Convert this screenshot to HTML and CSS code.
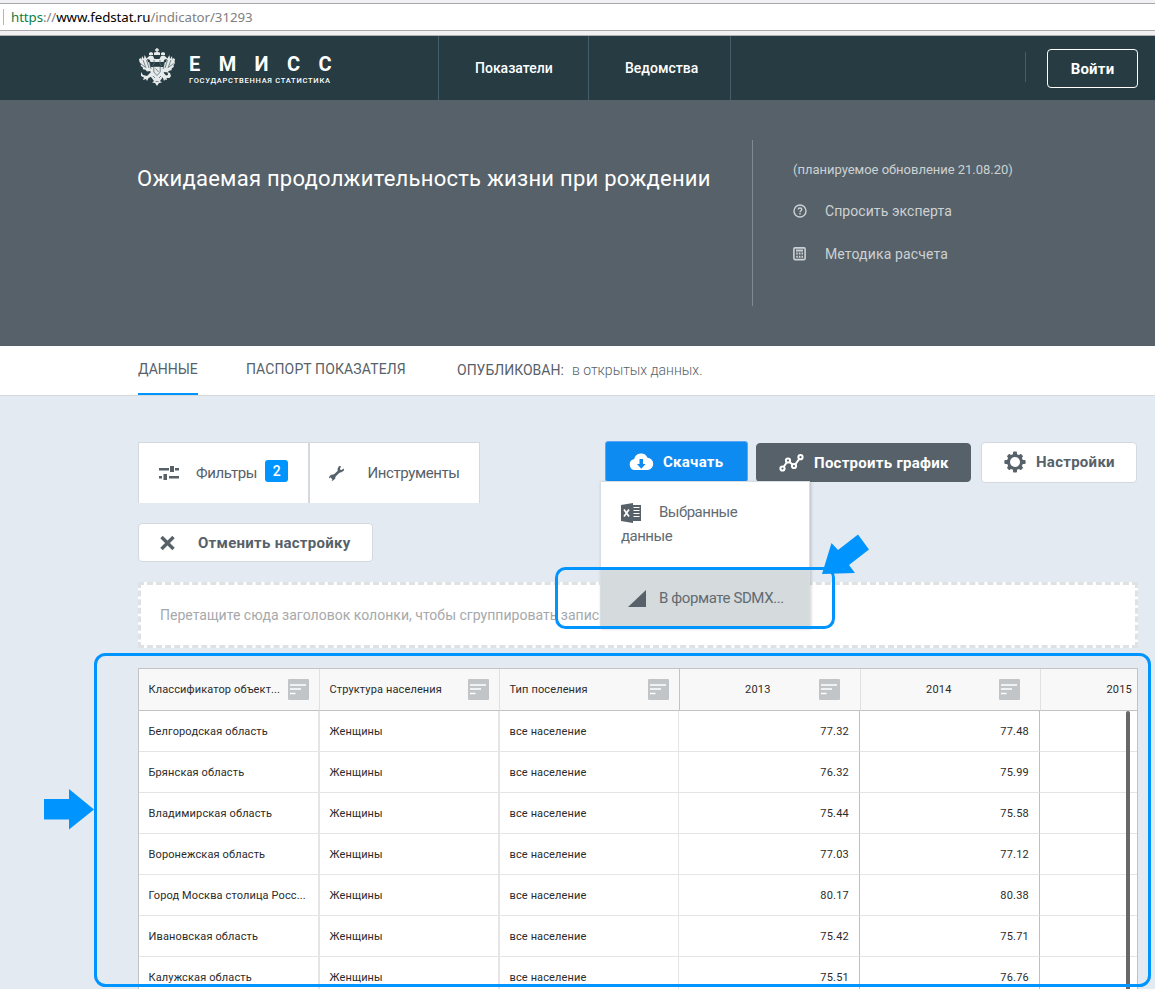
FILE: index.html
```html
<!DOCTYPE html>
<html lang="ru">
<head>
<meta charset="utf-8">
<title>ЕМИСС</title>
<link rel="stylesheet" href="styles.css">
</head>
<body>
<svg class="defs" width="0" height="0">
  <symbol id="sort" viewBox="0 0 21 21"><rect width="21" height="21" rx="1" fill="#c1c5c8"/><path d="M2 6h16M2 10h11M2 14.500h5.500" stroke="#fff" stroke-width="1.700"/></symbol>
</svg>
<div class="page">
  <div class="urlbar"><div class="url"><span class="proto">https</span>://<span class="host">www.fedstat.ru</span>/indicator/31293</div></div>

  <header class="top">
    <div class="logo">
      <svg class="eagle" width="36" height="38" viewBox="0 0 36 38" fill="#e6eaea">
        <path d="M17.300 0h1.400v1.300H20v1.400h-1.300V4l2.300.5V7h-6V4.500l2.300-.5V2.700H16V1.300h1.300z"/>
        <path d="M10 5l2-1 2 1v2h-4zM22 5l2-1 2 1v2h-4z"/>
        <path d="M9 9l2-1.500 3 .5 1.500 3h5L22 8l3-.5L27 9l1.500 2-3 .5-1 2.500h-13l-1-2.500-3-.5z"/>
        <path d="M0 11l2-1 .5 2L3 8l2 3 .5-4 2.500 4 1 3 2 1v4h14v-4l2-1 1-3 2.500-4 .5 4 2-3 .5 4 .5-2 2 1-.5 3 .5 1-1.500 2 .3 2-2 1.200-.3 2-2.500.6-1.500 1.700-3-.5L23 26H13l-2-3-3 .5L6.500 21.800 4 21.200l-.3-2-2-1.200.3-2L.5 14z"/>
        <path d="M12 22h12v7l-3 4 2 1.500-3 .5-2 3-2-3-3-.5 2-1.500-3-4z"/>
        <path d="M12 24l-4 4-4-1-2-3v4l3 1.500L4 32l3-1 1 2 1.500-3L14 28zM24 24l3 3.500 2-.5-.5-3 2.500 1 1 3-1.500 2-3 0 .5 2-2-.5-1 1.500L24 30z"/>
        <path d="M4 12l3 8M7.500 12l2.500 8M10.500 15l1.500 6M32 12l-3 8M28.500 12L26 20M25.500 15L24 21M15 12v4l-2 2M21 12v4l2 2M14.800 18.500h6.400v5.500L18 27.500 14.800 24zM16.500 20.500l3 3.500M14 28l2 2M22 28l-2 2M16.500 33.500h3M1.500 15.500L6 19M34.500 15.500L30 19" stroke="#5a6d73" stroke-width=".8" fill="none"/>
      </svg>
      <div class="brand"><b>ЕМИСС</b><span>ГОСУДАРСТВЕННАЯ СТАТИСТИКА</span></div>
    </div>
    <nav class="nav"><a class="n1"><span>Показатели</span></a><a class="n2"><span>Ведомства</span></a></nav>
    <div class="login"><i></i><button><span>Войти</span></button></div>
  </header>

  <section class="hero">
    <h1><span>Ожидаемая продолжительность жизни при рождении</span></h1>
    <div class="info">
      <p class="upd">(планируемое обновление 21.08.20)</p>
      <p class="ask"><svg width="14" height="14" viewBox="0 0 14 14" fill="none" stroke="#cdd1d3"><circle cx="7" cy="7" r="6" stroke-width="1.400"/><path d="M5.200 5.600c0-2.200 3.600-2.200 3.600 0C8.800 6.700 7 6.800 7 8.200M7 9v1.400" stroke-width="1.400"/></svg><span>Спросить эксперта</span></p>
      <p class="calc"><svg width="14" height="14" viewBox="0 0 14 14"><rect x=".9" y=".9" width="11.200" height="11.700" rx="1" fill="none" stroke="#cdd1d3" stroke-width="1.600"/><path d="M3 3.500h7M3.200 6.600h1.600M5.800 6.600h1.700M8.500 6.600h1.500M3.200 9.800h1.600M5.800 9.800h1.700M8.500 9.800h1.500" stroke="#cdd1d3" stroke-width="2"/></svg><span>Методика расчета</span></p>
    </div>
  </section>

  <div class="tabs">
    <a class="active">ДАННЫЕ</a><a class="pass">ПАСПОРТ ПОКАЗАТЕЛЯ</a>
    <div class="pub"><span class="lbl">ОПУБЛИКОВАН:</span><span class="val">в открытых данных.</span></div>
  </div>

  <main class="main">
    <div class="toolbar">
      <div class="panel">
        <div class="cell filt"><svg width="21" height="15" viewBox="0 0 21 15" fill="#566169"><path d="M0 2h10v2.500H0zM11 0h4v6h-4zM16 2h4v2.500h-4zM0 10h3v2.500H0zM4.500 8h3.500v6H4.500zM10 10h10v2.500H10z"/></svg><span class="t">Фильтры</span><span class="badge">2</span></div>
        <div class="cell tools"><svg width="15" height="15" viewBox="0 0 15 15"><path d="M2.500 12.500 11.500 4" stroke="#566169" stroke-width="2.600"/><path d="M10 0 8.500 3l.5 3 3 .5 3-2-.3-2L12 4.200l-1.200-1L12 .3zM5 8.500 2 8.700 0 11l.3 1.300 2-1.200L4 12.500l-1.500 2 1.200.3 2.500-2 .3-3z" fill="#566169"/></svg><span class="t">Инструменты</span></div>
      </div>
      <div class="buttons">
        <button class="btn dl"><svg width="25" height="18" viewBox="0 0 25 18"><path d="M6 17a5.500 5.500 0 0 1-.8-10.900A7 7 0 0 1 18.500 4.700 6.200 6.200 0 0 1 19 17z" fill="#fff"/><path d="M10.500 6h3.500v5h2.600l-4.300 4.700L8 11h2.500z" fill="#0e8bf1"/></svg><span>Скачать</span></button>
        <button class="btn chart"><svg width="25" height="18" viewBox="0 0 25 18" fill="none" stroke="#fff" stroke-width="2"><circle cx="3.500" cy="14.500" r="2.100"/><circle cx="9" cy="6.500" r="2.100"/><circle cx="15" cy="12" r="2.100"/><circle cx="21.500" cy="3.200" r="2.100"/><path d="M4.800 12.700 7.800 8.300M10.600 8l2.800 2.500M16.300 10.300 20.200 5"/></svg><span>Построить график</span></button>
        <button class="btn set"><svg width="22" height="22" viewBox="-11 -11 22 22"><g fill="#566169"><g id="teeth"><rect x="-2" y="-10.600" width="4" height="21.200" rx="1"/><rect x="-10.600" y="-2" width="21.200" height="4" rx="1"/></g><use href="#teeth" transform="rotate(45) scale(.93)"/><circle r="8"/></g><circle r="5" fill="#fff"/></svg><span>Настройки</span></button>
        <div class="menu">
          <div class="item sel"><svg width="21" height="21" viewBox="0 0 21 21"><path d="M0 2 12 0v20L0 18z" fill="#566169"/><path d="M12 2h8v16h-8z" fill="#566169"/><path d="M12.500 4.500h6M12.500 7.500h6M12.500 10.500h6M12.500 13.500h6" stroke="#fff" stroke-width="1.100"/><path d="M3 6.500 8 13.500M8 6.500 3 13.500" stroke="#fff" stroke-width="1.700"/></svg><span>Выбранные данные</span></div>
          <div class="item sdmx"><svg width="18" height="18" viewBox="0 0 18 18"><path d="M18 0v17H0z" fill="#566169"/></svg><span>В формате SDMX...</span></div>
        </div>
      </div>
    </div>
    <button class="btn cancel"><svg width="15" height="14" viewBox="0 0 15 14"><path d="M1.500 1 13.500 13M13.500 1 1.500 13" stroke="#566169" stroke-width="3.400"/></svg><span>Отменить настройку</span></button>
    <div class="drop"><span>Перетащите сюда заголовок колонки, чтобы сгруппировать записи</span></div>

    <div class="grid">
      <div class="row head"><div class="w1"><span>Классификатор объект...</span><svg><use href="#sort"/></svg></div><div><span>Структура населения</span><svg><use href="#sort"/></svg></div><div><span>Тип поселения</span><svg><use href="#sort"/></svg></div><div class="yr"><span>2013</span><svg><use href="#sort"/></svg></div><div class="yr"><span>2014</span><svg><use href="#sort"/></svg></div><div class="last"><span>2015</span></div></div>
      <div class="row"><div>Белгородская область</div><div>Женщины</div><div>все население</div><div>77.32</div><div>77.48</div><div></div></div>
      <div class="row"><div>Брянская область</div><div>Женщины</div><div>все население</div><div>76.32</div><div>75.99</div><div></div></div>
      <div class="row"><div>Владимирская область</div><div>Женщины</div><div>все население</div><div>75.44</div><div>75.58</div><div></div></div>
      <div class="row"><div>Воронежская область</div><div>Женщины</div><div>все население</div><div>77.03</div><div>77.12</div><div></div></div>
      <div class="row"><div>Город Москва столица Росс...</div><div>Женщины</div><div>все население</div><div>80.17</div><div>80.38</div><div></div></div>
      <div class="row"><div>Ивановская область</div><div>Женщины</div><div>все население</div><div>75.42</div><div>75.71</div><div></div></div>
      <div class="row"><div>Калужская область</div><div>Женщины</div><div>все население</div><div>75.51</div><div>76.76</div><div></div></div>
      <div class="scroll"></div>
    </div>
  </main>

  <svg class="notes" width="1155" height="989" viewBox="0 0 1155 989">
    <g fill="none" stroke="#0094ff" stroke-width="3"><rect x="95.500" y="654.500" width="1054" height="331" rx="10"/><rect x="556.500" y="568.500" width="277" height="59" rx="9"/></g>
    <path d="M44 799h25v-10l25 20.500-25 20v-10H44zM822 574l9.500-31 6.500 7 20-15.500 11 15-20 15.500 6 8z" fill="#0094ff"/>
  </svg>
</div>
</body>
</html>
```
FILE: styles.css
```css
* { box-sizing: border-box; }
body { margin: 0; background: #e4eaf2; font-family: Roboto, "Liberation Sans", sans-serif; color: #566169; }
p, h1 { margin: 0; }
svg { display: block; flex: none; }
.defs { position: absolute; }
.page { position: relative; width: 1155px; height: 989px; overflow: hidden; }
button { font: inherit; cursor: pointer; padding: 0; white-space: nowrap; }

.urlbar { height: 36px; background: #f1f0f2; border-bottom: 1px solid #b0b0b0; padding-top: 3px; }
.url { height: 28px; background: #fff; border: solid #a9a9a9; border-width: 1px 0; font: 13.300px/26px "Noto Sans", "Open Sans", sans-serif; color: #808080; padding-left: 7px; display: flex; position: relative; letter-spacing: -.08px; }
.url::before { content: ""; width: 1px; height: 16px; background: #b5b5b5; margin: 5px 7px 0 -4px; }
.proto { color: #0b8043; }
.host { color: #000; }

.top { height: 64px; background: #263b42; display: flex; }
.logo { width: 438px; padding-left: 139px; display: flex; }
.eagle { margin-top: 12px; }
.brand { margin-left: 14px; color: #fff; padding-top: 17px; white-space: nowrap; }
.brand b { display: block; font-weight: 700; font-size: 20px; line-height: 22px; letter-spacing: 18.400px; }
.brand span { display: block; font-weight: 500; font-size: 7.500px; line-height: 12px; letter-spacing: .75px; }
.nav { display: flex; color: #fff; font-weight: 500; font-size: 14px; line-height: 65px; }
.nav a { border-left: 1px solid #445e6a; padding-left: 36px; }
.n1 { width: 150px; }
.nav .n2 { width: 143px; border-right: 1px solid #445e6a; }
.login { margin-left: auto; margin-right: 17px; display: flex; }
.login i { width: 1px; height: 30px; background: #445e6a; margin: 16px 21px 0 0; }
.login button { width: 91px; height: 39px; margin-top: 13px; border: 1px solid #fff; border-radius: 4px; background: none; color: #fff; font-size: 15px; font-weight: 700; letter-spacing: .2px; }

.hero { height: 246px; background: #566169; display: flex; padding-left: 137px; }
.hero h1 { width: 615px; padding-top: 64px; font-size: 22px; line-height: 30px; font-weight: 400; color: #fff; letter-spacing: .25px; white-space: nowrap; }
.info { margin-top: 40px; height: 166px; border-left: 1px solid #818a91; padding: 19px 0 0 40px; color: #cdd1d3; font-size: 14px; white-space: nowrap; }
.info p { display: flex; align-items: center; }
.info svg { margin-right: 18px; }
.upd { height: 20px; font-size: 13px; letter-spacing: -.02px; }
.ask { margin-top: 21px; height: 22px; letter-spacing: .07px; }
.calc { margin-top: 21px; height: 22px; letter-spacing: .15px; }

.tabs { height: 50px; background: #fff; border-bottom: 1px solid #d3d9dd; padding-left: 138px; display: flex; font-size: 14px; line-height: 46px; white-space: nowrap; }
.tabs a { height: 49px; }
.active { border-bottom: 2px solid #0094ff; width: 60px; }
.pass { margin-left: 48px; width: 160px; letter-spacing: .12px; }
.pub { margin-left: 51px; padding-top: 1px; display: flex; }
.lbl { width: 115px; }
.val { font-weight: 300; }

.main { padding: 46px 0 0 138px; width: 1138px; }
.toolbar { display: flex; justify-content: space-between; height: 61px; }
.panel { display: flex; width: 342px; border: 1px solid #d3d9dd; border-bottom: 0; background: #fff; font-size: 15px; letter-spacing: -.4px; }
.cell { display: flex; align-items: center; width: 170px; padding-left: 20px; }
.filt { border-right: 2px solid #d3d9dd; width: 171px; }
.cell.tools { padding-left: 19px; }
.filt .t { margin-left: 16px; width: 69px; }
.badge { width: 23px; height: 22px; border-radius: 3px; background: #0094ff; color: #fff; font-size: 14px; font-weight: 500; line-height: 23px; text-align: center; margin-top: -5px; }
.tools .t { margin-left: 24px; }
.buttons { position: relative; display: flex; width: 533px; }
.btn { display: flex; align-items: center; border-radius: 4px; border: 1px solid #d3d9dd; background: #fff; color: #566169; font-size: 15px; font-weight: 700; letter-spacing: .27px; }
.dl { width: 143px; height: 41px; margin-top: -1px; background: #0e8bf1; border-color: #5aa4f5; color: #fff; padding-left: 23px; border-radius: 3px; }
.dl span { margin-left: 9px; }
.chart { width: 215px; height: 39px; margin: 1px 0 0 8px; background: #566169; border-color: #566169; color: #fff; padding-left: 22px; }
.chart span { margin-left: 10px; }
.set { width: 156px; height: 41px; margin-left: 10px; padding: 0 0 2px 22px; }
.set span { margin-left: 10px; }
.menu { position: absolute; left: -5px; top: 39px; width: 210px; height: 147px; background: #fff; border: 1px solid #d9dee2; box-shadow: 1px 1px 3px rgba(0,0,0,.2); font-size: 15px; line-height: 24px; z-index: 2; letter-spacing: -.4px; }
.item { color: #626b72; }
.item svg { display: inline-block; vertical-align: middle; margin-right: 17px; }
.sel { height: 86px; padding: 18px 60px 0 20px; }
.sel span { letter-spacing: -.5px; }
.sdmx { height: 59px; background: #d5dadc; padding: 18px 0 0 27px; white-space: nowrap; }
.sdmx svg { margin-right: 13px; }
.cancel { width: 235px; height: 39px; margin-top: 20px; padding-left: 21px; }
.cancel span { margin-left: 23px; }
.drop { margin-top: 20px; height: 66px; width: 1000px; border: 3px dashed #dfe2e4; background: #fff; padding-left: 19px; line-height: 60px; font-size: 14px; color: #a5a9ac; letter-spacing: .02px; }

.grid { position: relative; margin-top: 20px; width: 1000px; border: 1px solid #c3c3c3; border-bottom: 0; background: #fff; font-size: 11px; color: #2b2b2b; letter-spacing: .13px; height: 330px; overflow: hidden; }
.row { display: grid; grid-template-columns: 181px 180px 179px 181px 180px 97px; height: 41px; line-height: 42px; white-space: nowrap; }
.row > div { height: 41px; border-bottom: 1px solid #e5e5e5; border-right: 2px solid #e5e5e5; padding: 0 10px 0 9.500px; }
.row > div:nth-child(3) { border-right-width: 1px; }
.row > div:nth-child(n+4) { text-align: right; border-right: 1px solid #bfbfbf; letter-spacing: .2px; }
.row > div:nth-child(6) { border-right: 0; }
.head.row { height: 42px; background: #f8f8f8; grid-template-columns: 181px 180px 180px 181px 180px 96px; }
.head.row > div { height: 42px; display: flex; justify-content: space-between; align-items: center; border-bottom: 1px solid #c3c3c3; border-right: 1px solid #e0e0e0; padding-right: 10px; }
.head.row > div:nth-child(3) { border-right-color: #c3c3c3; }
.head.row > div:nth-child(6) { border-right: 0; padding-right: 5px; justify-content: flex-end; }
.head.row .yr { padding-left: 65px; padding-right: 20px; }
.head span { padding-top: 1px; }
.head svg { width: 21px; height: 21px; }
.scroll { position: absolute; left: 987px; top: 42px; width: 4px; height: 300px; border-radius: 2px; background: #686868; }
.notes { position: absolute; left: 0; top: 0; z-index: 5; pointer-events: none; }
```
